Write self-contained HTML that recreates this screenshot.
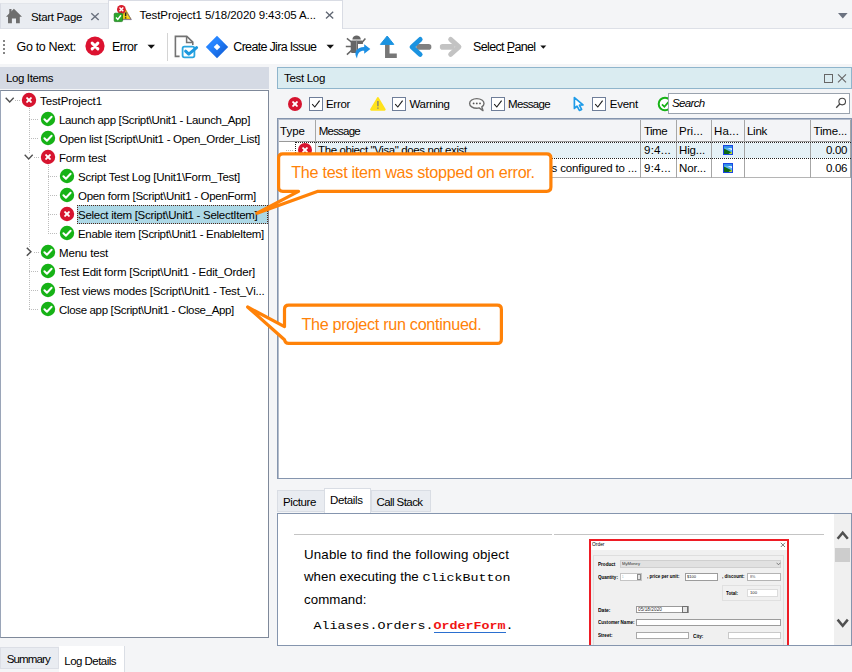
<!DOCTYPE html>
<html><head><meta charset="utf-8"><title>Test Log</title>
<style>
*{box-sizing:border-box;margin:0;padding:0}
html,body{width:852px;height:672px;overflow:hidden;background:#f4f5f7;font-family:"Liberation Sans",sans-serif;font-size:12px;color:#000}
.a{position:absolute;display:block}
.t{position:absolute;white-space:pre;line-height:20px;height:20px}
.hd{height:1px;background:repeating-linear-gradient(to right,#bcbcbc 0 1px,transparent 1px 2px)}
.vd{width:1px;background:repeating-linear-gradient(to bottom,#bcbcbc 0 1px,transparent 1px 2px)}
</style></head><body>
<div class="a" style="left:0;top:0;width:852px;height:29px;background:#f4f5f7;border-bottom:1px solid #dde0e7"></div>
<div class="a" style="left:0;top:3px;width:109px;height:26px;background:#e9ecf1;border-top:1px solid #e2e5ea;border-left:1px solid #d9dce4;border-right:1px solid #dfe2e9;border-bottom:1px solid #dde0e7"></div>
<div class="a" style="left:108px;top:0;width:235px;height:30px;background:#fff;border-left:1px solid #d9dce4;border-right:1px solid #d9dce4;border-top:1px solid #d9dce4"></div>
<svg class="a" style="left:4px;top:6px" width="20" height="20" viewBox="4 6 20 20"><path d="M13.9 8.8L22 16.8H19.8V23.3H16V18.6H11.9V23.3H8V16.8H6Z" fill="#6e6e6e"/><rect x="9.3" y="9" width="2.2" height="5" fill="#6e6e6e"/></svg>
<svg class="a" style="left:90px;top:12px" width="10" height="10" viewBox="90 12 10 10"><path d="M91.3 13.2L98.7 20M98.7 13.2L91.3 20" stroke="#69707d" stroke-width="1.4"/></svg>
<svg class="a" style="left:112px;top:3px" width="22" height="21" viewBox="112 3 22 21"><path d="M125.6 9.6L131 19.2H120.4Z" fill="#f8d718" stroke="#b08c00" stroke-width="0.8" stroke-linejoin="round"/><path d="M126 11.8L131.4 19.6H121" fill="none" stroke="#6a62a8" stroke-width="0.7"/><path d="M125.6 12.6V16.2M125.6 17.2V18.4" stroke="#222" stroke-width="1.5"/><circle cx="121.4" cy="9.4" r="4.4" fill="#d81e2c"/><path d="M119.5 7.5L123.3 11.3M123.3 7.5L119.5 11.3" stroke="#fff" stroke-width="1.4"/><rect x="114.2" y="13.2" width="8.4" height="8.4" rx="1" fill="#2aa82a" stroke="#167016" stroke-width="0.7"/><path d="M116 17.4L117.8 19.4L121 15.2" fill="none" stroke="#fff" stroke-width="1.5"/></svg>
<svg class="a" style="left:324px;top:10px" width="12" height="10" viewBox="324 10 12 10"><path d="M326 11.7L333.2 18.5M333.2 11.7L326 18.5" stroke="#5f6672" stroke-width="1.3"/></svg>
<svg class="a" style="left:836.8px;top:12px" width="12" height="8" viewBox="0 0 12 8"><path d="M1 1H10.6L5.8 6.4Z" fill="#6b7280"/></svg>
<div class="a" style="left:0;top:29px;width:852px;height:35px;background:#fff"></div>
<div class="a" style="left:3px;top:40px;width:2px;height:15px;background:repeating-linear-gradient(to bottom,#858585 0 2px,transparent 2px 4px)"></div>
<svg class="a" style="left:83.6px;top:34.7px" width="22" height="22" viewBox="-11 -11 22 22"><circle r="9.6" fill="#dc1230"/><path d="M-2.9 -2.9L2.9 2.9M2.9 -2.9L-2.9 2.9" stroke="#fff" stroke-width="2.9" stroke-linecap="round"/></svg>
<svg class="a" style="left:147px;top:44px" width="9" height="6" viewBox="0 0 9 6"><path d="M0.5 0.8H8L4.25 4.8Z" fill="#111"/></svg>
<div class="a" style="left:167px;top:33px;width:1px;height:28px;background:#d4d4d4"></div>
<svg class="a" style="left:172px;top:33px" width="28" height="28" viewBox="172 33 28 28"><path d="M179.6 56.4H175.4V36.4H186.8L192.8 42.2V45" fill="none" stroke="#737373" stroke-width="1.6"/><path d="M186.6 36.6V42.4H192.6" fill="none" stroke="#737373" stroke-width="1.5"/><rect x="182.6" y="46.6" width="11.8" height="10.8" rx="1.8" fill="#fff" stroke="#2aa6e0" stroke-width="1.8"/><path d="M185.6 51.2L188.8 54.2L196.6 47.6" fill="none" stroke="#1c98de" stroke-width="3" stroke-linecap="round" stroke-linejoin="round"/></svg>
<svg class="a" style="left:204.9px;top:35px" width="24" height="24" viewBox="-12 -12 24 24"><defs><linearGradient id="jg" x1="0" y1="0" x2="1" y2="1"><stop offset="0.35" stop-color="#2684ff"/><stop offset="1" stop-color="#0b54cc"/></linearGradient></defs><path d="M0 -11.2L11.2 0L0 11.2L-11.2 0Z" fill="url(#jg)"/><path d="M0 -3.3L3.3 0L0 3.3L-3.3 0Z" fill="#fff"/></svg>
<svg class="a" style="left:326px;top:44px" width="9" height="6" viewBox="0 0 9 6"><path d="M0.5 0.8H8L4.25 4.8Z" fill="#111"/></svg>
<svg class="a" style="left:344px;top:33px" width="28" height="28" viewBox="344 33 28 28"><g stroke="#666" stroke-width="1.5" fill="none"><path d="M346.9 38.4L352 42.5M345.8 46.6H351M346.9 54.6L351.6 50.4M365.4 38.4L362 42.5"/></g><path d="M352.4 39.6C352.4 34 360.8 34 360.8 39.6Z" fill="#666"/><path d="M350.7 41.8Q350.7 40.5 352 40.5H361.6Q362.9 40.5 362.9 41.8V44H358V53H352Q350.7 53 350.7 51.6Z" fill="#666"/><path d="M356.6 40.6V53" stroke="#9a9a9a" stroke-width="0.9"/><path d="M364.2 44.2L370.3 49L364.2 53.8V50.8C360 50.6 357.8 52.6 357 58.4C353 52 357 47 364.2 47Z" fill="#1b8fe4"/></svg>
<svg class="a" style="left:379px;top:34px" width="20" height="26" viewBox="379 34 20 26"><path d="M387.3 44V55.7H396.8" fill="none" stroke="#777" stroke-width="4.5"/><path d="M387.2 36L393.8 44.4H380.4Z" fill="#1b93e0" stroke="#1b93e0" stroke-width="1" stroke-linejoin="round"/></svg>
<svg class="a" style="left:405px;top:34px" width="30" height="26" viewBox="405 34 30 26"><path d="M419 46.9H428.6" stroke="#808080" stroke-width="5.6" stroke-linecap="round"/><path d="M420.2 39.4L412 46.9L420.2 54.4" fill="none" stroke="#1b93e0" stroke-width="4.8" stroke-linecap="round" stroke-linejoin="round"/></svg>
<svg class="a" style="left:436px;top:34px" width="30" height="26" viewBox="436 34 30 26"><path d="M442.6 46.9H452" stroke="#c3c3c3" stroke-width="5.6" stroke-linecap="round"/><path d="M450.6 39.4L459 46.9L450.6 54.4" fill="none" stroke="#c3c3c3" stroke-width="4.8" stroke-linecap="round" stroke-linejoin="round"/></svg>
<div class="a" style="left:507.3px;top:52px;width:6.8px;height:1px;background:#000"></div>
<svg class="a" style="left:540px;top:45px" width="7" height="5" viewBox="0 0 7 5"><path d="M0.3 0.6H6.3L3.3 3.8Z" fill="#111"/></svg>
<div class="a" style="left:0;top:67px;width:269px;height:22px;background:#d5dae4"></div>
<div class="a" style="left:0;top:90px;width:269px;height:548px;background:#fff;border:1px solid #7f899a;border-left-color:#9aa5b8"></div>
<div class="a" style="left:77px;top:205px;width:191px;height:19px;background:#add8e6;border:1px dotted #522719"></div>
<div class="a vd" style="left:29px;top:108px;height:202px"></div>
<div class="a vd" style="left:48px;top:165px;height:69px"></div>
<svg class="a" style="left:21px;top:92px" width="16" height="16" viewBox="-8 -8 16 16"><circle r="7.2" fill="#d6142f"/><path d="M-1.9 -1.9L1.9 1.9M1.9 -1.9L-1.9 1.9" stroke="#fff" stroke-width="2" stroke-linecap="round"/></svg>
<svg class="a" style="left:5px;top:97px;background:#fff" width="10" height="7" viewBox="0 0 10 7"><path d="M0.7 0.8L4.7 4.9L8.7 0.8" fill="none" stroke="#505050" stroke-width="1.4"/></svg>
<div class="a hd" style="left:15px;top:100px;width:5px"></div>
<svg class="a" style="left:40px;top:111px" width="16" height="16" viewBox="-8 -8 16 16"><circle r="7.2" fill="#16b216"/><path d="M-3.6 0.2L-1.1 2.7L3.6 -2.2" fill="none" stroke="#fff" stroke-width="2" stroke-linecap="round" stroke-linejoin="round"/></svg>
<div class="a hd" style="left:29px;top:119px;width:10px"></div>
<svg class="a" style="left:40px;top:130px" width="16" height="16" viewBox="-8 -8 16 16"><circle r="7.2" fill="#16b216"/><path d="M-3.6 0.2L-1.1 2.7L3.6 -2.2" fill="none" stroke="#fff" stroke-width="2" stroke-linecap="round" stroke-linejoin="round"/></svg>
<div class="a hd" style="left:29px;top:138px;width:10px"></div>
<svg class="a" style="left:40px;top:149px" width="16" height="16" viewBox="-8 -8 16 16"><circle r="7.2" fill="#d6142f"/><path d="M-1.9 -1.9L1.9 1.9M1.9 -1.9L-1.9 1.9" stroke="#fff" stroke-width="2" stroke-linecap="round"/></svg>
<svg class="a" style="left:24px;top:154px;background:#fff" width="10" height="7" viewBox="0 0 10 7"><path d="M0.7 0.8L4.7 4.9L8.7 0.8" fill="none" stroke="#505050" stroke-width="1.4"/></svg>
<div class="a hd" style="left:34px;top:157px;width:5px"></div>
<svg class="a" style="left:59px;top:168px" width="16" height="16" viewBox="-8 -8 16 16"><circle r="7.2" fill="#16b216"/><path d="M-3.6 0.2L-1.1 2.7L3.6 -2.2" fill="none" stroke="#fff" stroke-width="2" stroke-linecap="round" stroke-linejoin="round"/></svg>
<div class="a hd" style="left:48px;top:176px;width:10px"></div>
<svg class="a" style="left:59px;top:187px" width="16" height="16" viewBox="-8 -8 16 16"><circle r="7.2" fill="#16b216"/><path d="M-3.6 0.2L-1.1 2.7L3.6 -2.2" fill="none" stroke="#fff" stroke-width="2" stroke-linecap="round" stroke-linejoin="round"/></svg>
<div class="a hd" style="left:48px;top:195px;width:10px"></div>
<svg class="a" style="left:59px;top:206px" width="16" height="16" viewBox="-8 -8 16 16"><circle r="7.2" fill="#d6142f"/><path d="M-1.9 -1.9L1.9 1.9M1.9 -1.9L-1.9 1.9" stroke="#fff" stroke-width="2" stroke-linecap="round"/></svg>
<div class="a hd" style="left:48px;top:214px;width:10px"></div>
<svg class="a" style="left:59px;top:225px" width="16" height="16" viewBox="-8 -8 16 16"><circle r="7.2" fill="#16b216"/><path d="M-3.6 0.2L-1.1 2.7L3.6 -2.2" fill="none" stroke="#fff" stroke-width="2" stroke-linecap="round" stroke-linejoin="round"/></svg>
<div class="a hd" style="left:48px;top:233px;width:10px"></div>
<svg class="a" style="left:40px;top:244px" width="16" height="16" viewBox="-8 -8 16 16"><circle r="7.2" fill="#16b216"/><path d="M-3.6 0.2L-1.1 2.7L3.6 -2.2" fill="none" stroke="#fff" stroke-width="2" stroke-linecap="round" stroke-linejoin="round"/></svg>
<svg class="a" style="left:26.3px;top:247px;background:#fff" width="7" height="10" viewBox="0 0 7 10"><path d="M0.8 0.7L4.9 4.7L0.8 8.7" fill="none" stroke="#505050" stroke-width="1.5"/></svg>
<div class="a hd" style="left:34px;top:252px;width:5px"></div>
<svg class="a" style="left:40px;top:263px" width="16" height="16" viewBox="-8 -8 16 16"><circle r="7.2" fill="#16b216"/><path d="M-3.6 0.2L-1.1 2.7L3.6 -2.2" fill="none" stroke="#fff" stroke-width="2" stroke-linecap="round" stroke-linejoin="round"/></svg>
<div class="a hd" style="left:29px;top:271px;width:10px"></div>
<svg class="a" style="left:40px;top:282px" width="16" height="16" viewBox="-8 -8 16 16"><circle r="7.2" fill="#16b216"/><path d="M-3.6 0.2L-1.1 2.7L3.6 -2.2" fill="none" stroke="#fff" stroke-width="2" stroke-linecap="round" stroke-linejoin="round"/></svg>
<div class="a hd" style="left:29px;top:290px;width:10px"></div>
<svg class="a" style="left:40px;top:301px" width="16" height="16" viewBox="-8 -8 16 16"><circle r="7.2" fill="#16b216"/><path d="M-3.6 0.2L-1.1 2.7L3.6 -2.2" fill="none" stroke="#fff" stroke-width="2" stroke-linecap="round" stroke-linejoin="round"/></svg>
<div class="a hd" style="left:29px;top:309px;width:10px"></div>
<div class="a" style="left:277px;top:67px;width:575px;height:22px;background:#daecf1;border:1px solid #8fb5cc"></div>
<div class="a" style="left:824px;top:74px;width:9px;height:9px;border:1px solid #666"></div>
<svg class="a" style="left:837px;top:73px" width="10" height="10" viewBox="0 0 10 10"><path d="M1 1.4L9 9.4M9 1.4L1 9.4" stroke="#666" stroke-width="1.1"/></svg>
<svg class="a" style="left:287px;top:95.8px" width="16" height="16" viewBox="-8 -8 16 16"><circle r="7" fill="#d6142f"/><path d="M-1.9 -1.9L1.9 1.9M1.9 -1.9L-1.9 1.9" stroke="#fff" stroke-width="2" stroke-linecap="round"/></svg>
<div class="a" style="left:309px;top:97px;width:14px;height:14px;background:#fff;border:1px solid #6f7e99"></div><svg class="a" style="left:309px;top:97px" width="14" height="14" viewBox="0 0 14 14"><path d="M3.2 7.2L5.8 10L10.6 3.6" fill="none" stroke="#1a1a1a" stroke-width="1.1"/></svg>
<svg class="a" style="left:368px;top:94px" width="20" height="19" viewBox="368 94 20 19"><path d="M377.9 98.2L384.6 109.6H371.2Z" fill="#ffe21c" stroke="#ffe21c" stroke-width="2.2" stroke-linejoin="round"/><path d="M377.9 101V106.2M377.9 107.4V108.8" stroke="#8a8872" stroke-width="1.5"/></svg>
<div class="a" style="left:392px;top:97px;width:14px;height:14px;background:#fff;border:1px solid #6f7e99"></div><svg class="a" style="left:392px;top:97px" width="14" height="14" viewBox="0 0 14 14"><path d="M3.2 7.2L5.8 10L10.6 3.6" fill="none" stroke="#1a1a1a" stroke-width="1.1"/></svg>
<svg class="a" style="left:467px;top:96px" width="20" height="17" viewBox="467 96 20 17"><path d="M476.8 98.6C472.8 98.6 469.6 100.7 469.6 103.4C469.6 106.1 472.8 108.2 476.8 108.2C477.6 108.2 478.4 108.1 479.1 107.9L483 110.6L481.8 106.8C483.2 105.9 484 104.7 484 103.4C484 100.7 480.8 98.6 476.8 98.6Z" fill="#fafafa" stroke="#6e6e6e" stroke-width="1.4" stroke-linejoin="round"/><circle cx="473.6" cy="103.4" r="0.9" fill="#555"/><circle cx="476.8" cy="103.4" r="0.9" fill="#555"/><circle cx="480" cy="103.4" r="0.9" fill="#555"/></svg>
<div class="a" style="left:491px;top:97px;width:14px;height:14px;background:#fff;border:1px solid #6f7e99"></div><svg class="a" style="left:491px;top:97px" width="14" height="14" viewBox="0 0 14 14"><path d="M3.2 7.2L5.8 10L10.6 3.6" fill="none" stroke="#1a1a1a" stroke-width="1.1"/></svg>
<svg class="a" style="left:572px;top:95px" width="14" height="18" viewBox="572 95 14 18"><path d="M574.4 97.6V108.4L577 106.2L579.4 110.4L581.6 109.4L579.4 105.2L583 104.8Z" fill="#fff" stroke="#1e9be8" stroke-width="1.7" stroke-linejoin="round"/></svg>
<div class="a" style="left:592px;top:97px;width:14px;height:14px;background:#fff;border:1px solid #6f7e99"></div><svg class="a" style="left:592px;top:97px" width="14" height="14" viewBox="0 0 14 14"><path d="M3.2 7.2L5.8 10L10.6 3.6" fill="none" stroke="#1a1a1a" stroke-width="1.1"/></svg>
<svg class="a" style="left:657px;top:96px" width="16" height="16" viewBox="-8 -8 16 16"><circle r="6.3" fill="#fff" stroke="#16b216" stroke-width="2"/><path d="M-3 0.4L-0.6 2.8L3.4 -1.8" fill="none" stroke="#16b216" stroke-width="1.8"/></svg>
<div class="a" style="left:668px;top:93px;width:182px;height:21px;background:#fff;border:1px solid #9aa3ae"></div>
<svg class="a" style="left:835px;top:97px" width="12" height="12" viewBox="0 0 12 12"><circle cx="7.2" cy="4.6" r="3.3" fill="none" stroke="#444" stroke-width="1.1"/><path d="M4.8 7L1.2 10.8" stroke="#444" stroke-width="1.3"/></svg>
<div class="a" style="left:277px;top:118px;width:575px;height:361px;background:#fff;border:1px solid #8595ae"></div>
<div class="a" style="left:278px;top:119px;width:573px;height:359px;border-top:1px solid #b4bdcc;border-left:1px solid #b4bdcc"></div>
<div class="a" style="left:279px;top:120px;width:572px;height:22px;background:#f3f4f7;border-bottom:1px solid #999"></div>
<div class="a" style="left:316px;top:143px;width:535px;height:15px;background:#e5f1f6"></div>
<div class="a" style="left:279px;top:177px;width:572px;height:1px;background:#b5b5b5"></div>
<div class="a" style="left:315px;top:120px;width:1px;height:58px;background:#a6a6a6"></div>
<div class="a" style="left:640px;top:120px;width:1px;height:58px;background:#a6a6a6"></div>
<div class="a" style="left:676px;top:120px;width:1px;height:58px;background:#a6a6a6"></div>
<div class="a" style="left:711px;top:120px;width:1px;height:58px;background:#a6a6a6"></div>
<div class="a" style="left:744px;top:120px;width:1px;height:58px;background:#a6a6a6"></div>
<div class="a" style="left:810px;top:120px;width:1px;height:58px;background:#a6a6a6"></div>
<div class="a" style="left:850px;top:120px;width:1px;height:58px;background:#a6a6a6"></div>
<div class="a" style="left:295px;top:142px;width:556px;height:17px;border-top:1px dotted #222;border-bottom:1px dotted #222"></div>
<div class="a" style="left:295px;top:142px;width:18px;height:17px;border-left:1px dotted #222"></div>
<div class="a hd" style="left:286px;top:150px;width:8px"></div>
<svg class="a" style="left:297px;top:142.4px" width="16" height="16" viewBox="-8 -8 16 16"><circle r="7" fill="#d6142f"/><path d="M-1.9 -1.9L1.9 1.9M1.9 -1.9L-1.9 1.9" stroke="#fff" stroke-width="2" stroke-linecap="round"/></svg>
<svg class="a" style="left:723px;top:145px" width="10" height="10" viewBox="0 0 10 10"><rect x="0.5" y="0.5" width="9" height="9" fill="#58b4f4" stroke="#1b47e2"/><path d="M1 1H9V3.6L1 2.4Z" fill="#2f8fe8"/><path d="M4.5 3L9 3.2V5.2Z" fill="#e8f6ff"/><path d="M1 3.6L9 7.4V9H1Z" fill="#0d6a14"/><path d="M5.6 9L9 6.6V9Z" fill="#b8d832"/></svg>
<svg class="a" style="left:723px;top:163px" width="10" height="10" viewBox="0 0 10 10"><rect x="0.5" y="0.5" width="9" height="9" fill="#58b4f4" stroke="#1b47e2"/><path d="M1 1H9V3.6L1 2.4Z" fill="#2f8fe8"/><path d="M4.5 3L9 3.2V5.2Z" fill="#e8f6ff"/><path d="M1 3.6L9 7.4V9H1Z" fill="#0d6a14"/><path d="M5.6 9L9 6.6V9Z" fill="#b8d832"/></svg>
<div class="a" style="left:277px;top:490px;width:48px;height:22px;background:#e9ecf1;border:1px solid #d9dde4"></div>
<div class="a" style="left:371px;top:490px;width:60px;height:22px;background:#e9ecf1;border:1px solid #d9dde4"></div>
<div class="a" style="left:277px;top:513px;width:575px;height:133px;background:#fff;border:1px solid #8595ae"></div>
<div class="a" style="left:324px;top:488px;width:47px;height:25px;background:#fff;border:1px solid #d9dde4;border-bottom:none"></div>
<div class="a" style="left:294px;top:534px;width:258px;height:1px;background:#c4c4c4"></div>
<div class="a" style="left:554px;top:534px;width:270px;height:1px;background:#c4c4c4"></div>
<div class="a" style="left:434px;top:632px;width:72px;height:1px;background:#2a6fd0"></div>
<div class="a" style="left:589px;top:539px;width:200px;height:106px;overflow:hidden"><div class="a" style="left:0;top:0;width:200px;height:140px;border:2px solid #ee1c25;background:#f0f0f0"></div><div class="a" style="left:2px;top:2px;width:196px;height:9px;background:#fff"></div><svg class="a" style="left:190.6px;top:3.2px" width="6" height="6" viewBox="0 0 6 6"><path d="M0.8 0.8L5 5M5 0.8L0.8 5" stroke="#444" stroke-width="0.7"/></svg><div class="a" style="left:4.399999999999977px;top:16px;width:190.80000000000007px;height:105px;background:#f0f0f0;border:1px solid #dedede"></div><div class="a" style="left:31px;top:20.600000000000023px;width:161px;height:8.600000000000023px;background:#e1e1e1;border:1px solid #cfcfcf"></div><svg class="a" style="left:186.5px;top:23px" width="5" height="4" viewBox="0 0 5 4"><path d="M0.6 0.8L2.5 2.8L4.4 0.8" fill="none" stroke="#555" stroke-width="0.7"/></svg><div class="a" style="left:31px;top:34px;width:22px;height:7.600000000000023px;background:#fff;border:1px solid #c4c4c4"></div><div class="a" style="left:48px;top:34.60000000000002px;width:4.399999999999977px;height:6.399999999999977px;background:#e6e6e6;border:1px solid #8c8c8c"></div><div class="a" style="left:96px;top:34px;width:33.39999999999998px;height:7.600000000000023px;background:#fff;border:1px solid #9c9c9c"></div><div class="a" style="left:158.29999999999995px;top:34px;width:33.700000000000045px;height:7.600000000000023px;background:#fff;border:1px solid #b4b4b4"></div><div class="a" style="left:132.5px;top:45.60000000000002px;width:59.5px;height:16.600000000000023px;background:#f0f0f0;border:1px solid #e0e0e0"></div><div class="a" style="left:158.29999999999995px;top:50.200000000000045px;width:30.300000000000068px;height:7.599999999999909px;background:#fff;border:1px solid #dcdcdc"></div><div class="a" style="left:47px;top:66.60000000000002px;width:52.60000000000002px;height:7.600000000000023px;background:#fff;border:1px solid #9a9a9a"></div><div class="a" style="left:93px;top:67.20000000000005px;width:5.600000000000023px;height:6.399999999999977px;background:#e6e6e6;border:1px solid #707070"></div><div class="a" style="left:47px;top:79.60000000000002px;width:145px;height:7.600000000000023px;background:#fff;border:1px solid #9c9c9c"></div><div class="a" style="left:47px;top:92.79999999999995px;width:52.60000000000002px;height:7.600000000000023px;background:#fff;border:1px solid #a9a9a9"></div><div class="a" style="left:139px;top:92.79999999999995px;width:53px;height:7.600000000000023px;background:#fff;border:1px solid #c9c9c9"></div></div>
<div class="a" style="left:834px;top:514px;width:17px;height:131px;background:#f0f0f0"></div>
<div class="a" style="left:835px;top:548px;width:15px;height:14px;background:#cdcdcd"></div>
<svg class="a" style="left:835px;top:529px" width="15" height="12" viewBox="835 529 15 12"><path d="M837.6 538.8L842.7 532.6L847.8 538.8" fill="none" stroke="#505050" stroke-width="2.5"/></svg>
<svg class="a" style="left:835px;top:617px" width="15" height="12" viewBox="835 617 15 12"><path d="M837.6 619.6L842.7 625.8L847.8 619.6" fill="none" stroke="#505050" stroke-width="2.5"/></svg>
<div class="a" style="left:277px;top:645px;width:575px;height:1px;background:#8595ae"></div>
<div class="a" style="left:0;top:647px;width:59px;height:22px;background:#e9ecf1;border:1px solid #dcdfe6"></div>
<div class="a" style="left:59px;top:646px;width:66px;height:26px;background:#fff;border-right:1px solid #dadee5"></div>
<svg class="a" style="left:240px;top:145px;z-index:5" width="320" height="80" viewBox="240 145 320 80"><path d="M282.8 153.9H546.6999999999999Q550.9 153.9 550.9 158.1V187.10000000000002Q550.9 191.3 546.6999999999999 191.3H318L257 213.2L298.5 191.3H282.8Q278.6 191.3 278.6 187.10000000000002V158.1Q278.6 153.9 282.8 153.9Z" fill="#fff" stroke="#ff8208" stroke-width="3.2" stroke-linejoin="round"/></svg>
<svg class="a" style="left:240px;top:295px;z-index:5" width="280" height="60" viewBox="240 295 280 60"><path d="M288.7 305.2H497.2Q501.4 305.2 501.4 309.4V339.2Q501.4 343.4 497.2 343.4H288.7Q285.1 343.4 284.5 339.79999999999995L247.6 307L284.5 326.6V309.4Q284.5 305.2 288.7 305.2Z" fill="#fff" stroke="#ff8208" stroke-width="3.2" stroke-linejoin="round"/></svg>
<div class="t" style="left:31px;top:7.0px;font-size:11.5px;letter-spacing:-0.334px;">Start Page</div>
<div class="t" style="left:139.5px;top:4.9px;font-size:11.5px;letter-spacing:-0.072px;">TestProject1 5/18/2020 9:43:05 A...</div>
<div class="t" style="left:16.5px;top:37.0px;font-size:12.5px;letter-spacing:-0.339px;">Go to Next:</div>
<div class="t" style="left:112px;top:37.0px;font-size:12.5px;letter-spacing:-0.556px;">Error</div>
<div class="t" style="left:233.3px;top:37.0px;font-size:12.5px;letter-spacing:-0.681px;">Create Jira Issue</div>
<div class="t" style="left:473px;top:37.0px;font-size:12.5px;letter-spacing:-0.641px;">Select Panel</div>
<div class="t" style="left:6px;top:68.0px;font-size:11.5px;letter-spacing:-0.389px;">Log Items</div>
<div class="t" style="left:40px;top:90.5px;font-size:11.5px;letter-spacing:-0.107px;">TestProject1</div>
<div class="t" style="left:59px;top:109.5px;font-size:11.5px;letter-spacing:-0.341px;">Launch app [Script\Unit1 - Launch_App]</div>
<div class="t" style="left:59px;top:128.5px;font-size:11.5px;letter-spacing:-0.282px;">Open list [Script\Unit1 - Open_Order_List]</div>
<div class="t" style="left:59px;top:147.5px;font-size:11.5px;letter-spacing:-0.174px;">Form test</div>
<div class="t" style="left:78px;top:166.5px;font-size:11.5px;letter-spacing:-0.237px;">Script Test Log [Unit1\Form_Test]</div>
<div class="t" style="left:78px;top:185.5px;font-size:11.5px;letter-spacing:-0.301px;">Open form [Script\Unit1 - OpenForm]</div>
<div class="t" style="left:78px;top:204.5px;font-size:11.5px;letter-spacing:-0.281px;">Select item [Script\Unit1 - SelectItem]</div>
<div class="t" style="left:78px;top:223.5px;font-size:11.5px;letter-spacing:-0.312px;">Enable item [Script\Unit1 - EnableItem]</div>
<div class="t" style="left:59px;top:242.5px;font-size:11.5px;letter-spacing:-0.167px;">Menu test</div>
<div class="t" style="left:59px;top:261.5px;font-size:11.5px;letter-spacing:-0.218px;">Test Edit form [Script\Unit1 - Edit_Order]</div>
<div class="t" style="left:59px;top:280.5px;font-size:11.5px;letter-spacing:-0.19px;">Test views modes [Script\Unit1 - Test_Vi...</div>
<div class="t" style="left:59px;top:299.5px;font-size:11.5px;letter-spacing:-0.342px;">Close app [Script\Unit1 - Close_App]</div>
<div class="t" style="left:284px;top:68.0px;font-size:11.5px;letter-spacing:-0.311px;">Test Log</div>
<div class="t" style="left:326px;top:93.8px;font-size:11.5px;letter-spacing:-0.312px;">Error</div>
<div class="t" style="left:409.5px;top:93.8px;font-size:11.5px;letter-spacing:-0.315px;">Warning</div>
<div class="t" style="left:508px;top:93.8px;font-size:11.5px;letter-spacing:-0.667px;">Message</div>
<div class="t" style="left:609.7px;top:93.8px;font-size:11.5px;letter-spacing:-0.224px;">Event</div>
<div class="t" style="left:672px;top:93.0px;font-size:11.5px;letter-spacing:-0.656px;font-style:italic">Search</div>
<div class="t" style="left:280px;top:120.6px;font-size:11.5px;letter-spacing:0.016px;">Type</div>
<div class="t" style="left:318.7px;top:120.6px;font-size:11.5px;letter-spacing:-0.767px;">Message</div>
<div class="t" style="left:644px;top:120.6px;font-size:11.5px;letter-spacing:-0.535px;">Time</div>
<div class="t" style="left:679px;top:120.6px;font-size:11.5px;letter-spacing:0.06px;">Pri...</div>
<div class="t" style="left:714px;top:120.6px;font-size:11.5px;letter-spacing:0.141px;">Ha...</div>
<div class="t" style="left:747px;top:120.6px;font-size:11.5px;letter-spacing:-0.277px;">Link</div>
<div class="t" style="left:813.6px;top:120.6px;font-size:11.5px;letter-spacing:-0.188px;">Time...</div>
<div class="t" style="left:318px;top:139.6px;font-size:11.5px;letter-spacing:-0.396px;">The object &quot;Visa&quot; does not exist.</div>
<div class="t" style="left:644px;top:139.6px;font-size:11.5px;letter-spacing:0.237px;">9:4...</div>
<div class="t" style="left:679px;top:139.6px;font-size:11.5px;letter-spacing:-0.141px;">Hig...</div>
<div class="t" style="left:826px;top:139.6px;font-size:11.5px;letter-spacing:-0.348px;">0.00</div>
<div class="t" style="left:551.6px;top:157.6px;font-size:11.5px;letter-spacing:-0.148px;">s configured to ...</div>
<div class="t" style="left:644px;top:157.6px;font-size:11.5px;letter-spacing:0.237px;">9:4...</div>
<div class="t" style="left:679px;top:157.6px;font-size:11.5px;letter-spacing:-0.081px;">Nor...</div>
<div class="t" style="left:826px;top:157.6px;font-size:11.5px;letter-spacing:-0.348px;">0.06</div>
<div class="t" style="left:283px;top:492.0px;font-size:11.5px;letter-spacing:-0.4px;">Picture</div>
<div class="t" style="left:330px;top:490.0px;font-size:11.5px;letter-spacing:-0.379px;">Details</div>
<div class="t" style="left:376.5px;top:492.0px;font-size:11.5px;letter-spacing:-0.578px;">Call Stack</div>
<div class="t" style="left:304px;top:545.2px;font-size:13.3px;letter-spacing:0.176px;">Unable to find the following object</div>
<div class="t" style="left:304px;top:567.2px;font-size:13.3px;letter-spacing:0.006px;">when executing the</div>
<div class="t" style="left:422.5px;top:568.25px;font-size:13.33px;letter-spacing:0.001px;font-family:'Liberation Mono',monospace;transform:scaleY(.87);transform-origin:0 13.55px;">ClickButton</div>
<div class="t" style="left:304px;top:590.0px;font-size:13.3px;letter-spacing:0.053px;">command:</div>
<div class="t" style="left:313.6px;top:616.05px;font-size:13.33px;letter-spacing:0.001px;font-family:'Liberation Mono',monospace;transform:scaleY(.87);transform-origin:0 13.55px;">Aliases.Orders.</div>
<div class="t" style="left:433.6px;top:616.05px;font-size:13.33px;letter-spacing:0.002px;font-family:'Liberation Mono',monospace;color:#f01414;font-weight:bold;transform:scaleY(.87);transform-origin:0 13.55px;">OrderForm</div>
<div class="t" style="left:505.6px;top:616.05px;font-size:13.33px;letter-spacing:0.0px;font-family:'Liberation Mono',monospace;transform:scaleY(.87);transform-origin:0 13.55px;">.</div>
<div class="t" style="left:6.7px;top:648.7px;font-size:11.5px;letter-spacing:-0.843px;">Summary</div>
<div class="t" style="left:64.3px;top:650.5px;font-size:11.5px;letter-spacing:-0.532px;">Log Details</div>
<div class="t" style="left:291.2px;top:162.3px;font-size:16.2px;letter-spacing:-0.29px;color:#ff8208;;z-index:6">The test item was stopped on error.</div>
<div class="t" style="left:301.4px;top:314.1px;font-size:16.2px;letter-spacing:-0.307px;color:#ff8208;;z-index:6">The project run continued.</div>
<div class="t" style="left:591.5px;top:534.3px;font-size:12px;color:#000;transform:scale(0.4073);transform-origin:0 50%">Order</div>
<div class="t" style="left:597.5px;top:553.7px;font-size:12px;font-weight:bold;color:#000;transform:scale(0.3815);transform-origin:0 50%">Product</div>
<div class="t" style="left:622px;top:553.9px;font-size:12px;color:#333;transform:scale(0.346);transform-origin:0 50%">MyMoney</div>
<div class="t" style="left:597.5px;top:566.8px;font-size:12px;font-weight:bold;color:#000;transform:scale(0.3778);transform-origin:0 50%">Quantity:</div>
<div class="t" style="left:622px;top:566.8px;font-size:12px;color:#7aa;transform:scale(0.2243);transform-origin:0 50%">1</div>
<div class="t" style="left:646.6px;top:566.8px;font-size:12px;font-weight:bold;color:#000;transform:scale(0.3738);transform-origin:0 50%">, price per unit:</div>
<div class="t" style="left:687px;top:566.8px;font-size:12px;color:#222;transform:scale(0.337);transform-origin:0 50%">$100</div>
<div class="t" style="left:722px;top:566.8px;font-size:12px;font-weight:bold;color:#000;transform:scale(0.3725);transform-origin:0 50%">, discount:</div>
<div class="t" style="left:749.5px;top:566.8px;font-size:12px;color:#555;transform:scale(0.3171);transform-origin:0 50%">8%</div>
<div class="t" style="left:726px;top:582.9px;font-size:12px;font-weight:bold;color:#000;transform:scale(0.3776);transform-origin:0 50%">Total:</div>
<div class="t" style="left:749.5px;top:582.9px;font-size:12px;color:#222;transform:scale(0.3495);transform-origin:0 50%">100</div>
<div class="t" style="left:597.5px;top:599.6px;font-size:12px;font-weight:bold;color:#000;transform:scale(0.4164);transform-origin:0 50%">Date:</div>
<div class="t" style="left:638px;top:599.4px;font-size:12px;color:#333;transform:scale(0.3996);transform-origin:0 50%">05/18/2020</div>
<div class="t" style="left:597.5px;top:612.3px;font-size:12px;font-weight:bold;color:#000;transform:scale(0.3801);transform-origin:0 50%">Customer Name:</div>
<div class="t" style="left:597.5px;top:625.4px;font-size:12px;font-weight:bold;color:#000;transform:scale(0.3814);transform-origin:0 50%">Street:</div>
<div class="t" style="left:692.8px;top:625.6px;font-size:12px;font-weight:bold;color:#000;transform:scale(0.3899);transform-origin:0 50%">City:</div>
</body></html>
